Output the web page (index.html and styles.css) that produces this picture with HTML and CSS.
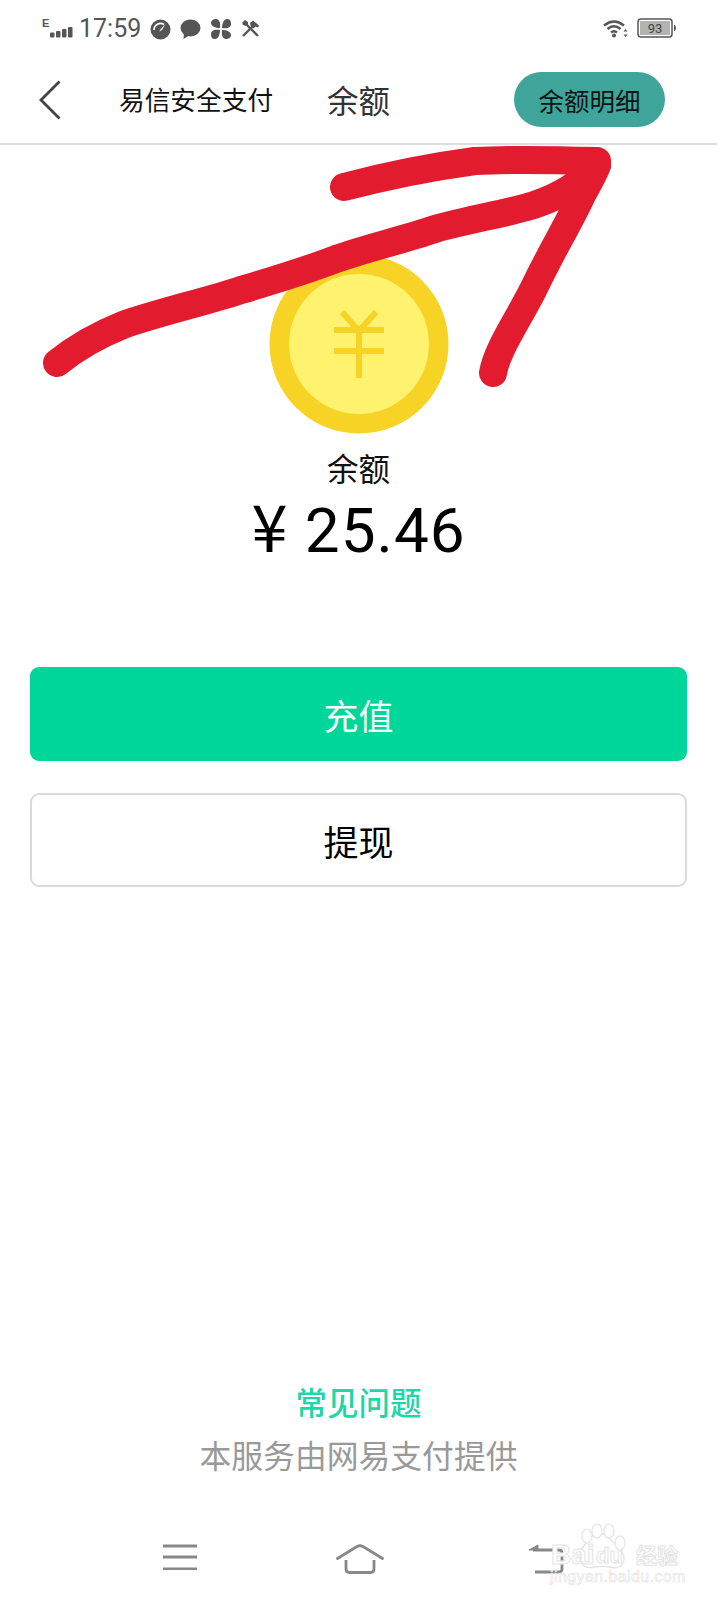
FILE: index.html
```html
<!DOCTYPE html>
<html lang="zh-CN">
<head>
<meta charset="utf-8">
<title>余额</title>
<link rel="stylesheet" href="styles.css">
</head>
<body>
<div class="page">
  <header class="status">
    <div class="status-left">
      <svg class="sig" width="32" height="20" viewBox="0 0 32 20">
        <text x="0" y="9" class="sig-e">E</text>
        <rect x="8" y="14.500" width="4.500" height="5" rx="1" fill="#555"/>
        <rect x="14" y="13" width="4.500" height="6.500" rx="1" fill="#555"/>
        <rect x="20" y="11" width="4.500" height="8.500" rx="1" fill="#555"/>
        <rect x="26" y="9" width="4.500" height="10.500" rx="1" fill="#555"/>
      </svg>
      <span class="time">17:59</span>
      <svg width="21" height="21" viewBox="0 0 21 21" class="ic-gauge">
        <circle cx="10.500" cy="10.500" r="10" fill="#555"/>
        <path d="M4 11a6.500 6.500 0 0 1 10-5.500" fill="none" stroke="#fff" stroke-width="1.600"/>
        <path d="M15.500 5 10.800 10 9 12.500 12 11Z" fill="#fff"/>
      </svg>
      <svg width="21" height="21" viewBox="0 0 21 21" class="ic-bubble">
        <ellipse cx="10.500" cy="9" rx="10" ry="8.500" fill="#555"/>
        <path d="M4 14 3.500 20 10 16Z" fill="#555"/>
      </svg>
      <svg width="22" height="22" viewBox="0 0 22 22" class="ic-fan">
        <path d="M10 10C5 10 1 8 1 5s3-4 5-4 5 2 4 9Z" fill="#555"/>
        <path d="M12 10c0-5 2-9 5-9s4 2 4 5-3 5-9 4Z" fill="#555"/>
        <path d="M12 12c5 0 9 2 9 5s-3 4-5 4-5-2-4-9Z" fill="#555"/>
        <path d="M10 12c0 5-2 9-5 9s-4-2-4-5 3-5 9-4Z" fill="#555"/>
      </svg>
      <svg width="20" height="20" viewBox="0 0 20 20" class="ic-tools">
        <path d="M2 17 13 6" stroke="#555" stroke-width="2.400" fill="none"/>
        <path d="M9 4l3-2.500 6 5-1 2-2.500-1-2 2-3-3Z" fill="#555"/>
        <path d="M6 6 17 17" stroke="#555" stroke-width="2.400" fill="none"/>
        <path d="M1.500 3.500 4 1l3 2v3L4.500 7 1.500 5.500Z" fill="#555"/>
      </svg>
    </div>
    <div class="status-right">
      <svg width="25" height="19" viewBox="0 0 25 19">
        <path d="M1 6.500Q11 -1.500 21 6.500" fill="none" stroke="#555" stroke-width="2.600"/>
        <path d="M4.500 10Q11 4.500 17.500 10" fill="none" stroke="#555" stroke-width="2.600"/>
        <path d="M8 13.500Q11 11 14 13.500" fill="none" stroke="#555" stroke-width="2.600"/>
        <circle cx="11" cy="16.500" r="2" fill="#555"/>
        <path d="M22.500 10l2 2.500h-4ZM22.500 18l-2-2.500h4Z" fill="#555"/>
      </svg>
      <svg width="40" height="20" viewBox="0 0 40 20">
        <rect x="1" y="1" width="34" height="18" rx="3" fill="#fff" stroke="#555" stroke-width="1.500"/>
        <rect x="3" y="3" width="30" height="14" fill="#b3b3b3"/>
        <path d="M37 6.500q2 .5 2 3.500t-2 3.500Z" fill="#555"/>
        <text x="18" y="15" class="batt">93</text>
      </svg>
    </div>
  </header>

  <nav class="nav">
    <svg class="back" width="22" height="40" viewBox="0 0 22 40">
      <path d="M20.500 1.500 2 20l18.500 18.500" fill="none" stroke="#444" stroke-width="2.800"/>
    </svg>
    <span class="nav-sub">易信安全支付</span>
    <span class="nav-title">余额</span>
    <span class="pill">余额明细</span>
  </nav>

  <main class="main">
    <svg class="coin" width="180" height="180" viewBox="0 0 180 180">
      <circle cx="90" cy="90" r="89.500" fill="#f6d324"/>
      <circle cx="90" cy="90" r="70" fill="#fef26f"/>
      <path d="M73 58 90 77 107 58M90 77V124M65 76H115M65 97H115" fill="none" stroke="#f6d324" stroke-width="6"/>
    </svg>
    <div class="label">余额</div>
    <div class="amount"><span class="yen">¥</span> 25.46</div>
    <div class="btn btn-primary">充值</div>
    <div class="btn btn-outline">提现</div>
  </main>

  <footer class="foot">
    <div class="faq">常见问题</div>
    <div class="provider">本服务由网易支付提供</div>
    <div class="softkeys">
      <svg width="34" height="26" viewBox="0 0 34 26">
        <path d="M0 2H34M0 13H34M0 25H34" stroke="#888" stroke-width="2.800"/>
      </svg>
      <svg class="key-home" width="48" height="30" viewBox="0 0 48 30">
        <path d="M1.500 14.500 21 2.500q3-1.500 6 0l19.500 12" fill="none" stroke="#888" stroke-width="2.800" stroke-linecap="round"/>
        <path d="M10 16V25q0 3.500 3.500 3.500h21q3.500 0 3.500-3.500V16" fill="none" stroke="#888" stroke-width="2.800"/>
      </svg>
      <svg width="36" height="30" viewBox="0 0 36 30">
        <path d="M1 6 10 1V6Z" fill="#888" stroke="#888"/>
        <path d="M5 6H31q3 0 3 3V25q0 3-3 3H7" fill="none" stroke="#888" stroke-width="2.800"/>
      </svg>
    </div>
  </footer>

  <svg class="overlay" width="717" height="1600" viewBox="0 0 717 1600">
    <g fill="none" stroke="#e21b2f" stroke-width="28" stroke-linecap="round" stroke-linejoin="round">
      <path d="M57 363C78 346 98 335 123 325C160 312 205 302 241 290C275 280 305 271 336 259C370 247 403 240 435 229C470 219 505 214 534 205C555 198 580 185 597 165"/>
      <path d="M344 187C390 175 430 167 475 161C510 159 560 160 597 161"/>
      <path d="M493 373C497 350 515 325 533 290C552 250 568 225 582 195C590 180 595 172 597 165"/>
    </g>
    <g class="wm">
      <path d="M590 1538c5-6 14-6 19 0 8 9 16 12 15 22-1 7-8 9-14 7-6-1-10-1-16 0-7 2-13-1-14-8-1-9 4-13 10-21Z" fill="#fff" stroke="#e4e4e4" stroke-width="1.400"/>
      <ellipse cx="587" cy="1536" rx="5" ry="7" fill="#fff" stroke="#e4e4e4" stroke-width="1.200"/>
      <ellipse cx="597" cy="1531" rx="5" ry="7" fill="#fff" stroke="#e4e4e4" stroke-width="1.200"/>
      <ellipse cx="609" cy="1531" rx="5" ry="7" fill="#fff" stroke="#e4e4e4" stroke-width="1.200"/>
      <ellipse cx="620" cy="1543" rx="5" ry="7" fill="#fff" stroke="#e4e4e4" stroke-width="1.200"/>
      <text x="551" y="1564" class="wm-big">Bai</text>
      <text x="596" y="1563" class="wm-du">du</text>
      <text x="636" y="1563" class="wm-cn">经验</text>
      <text x="550" y="1582" class="wm-small">jingyan.baidu.com</text>
    </g>
  </svg>
</div>
</body>
</html>
```
FILE: styles.css
```css
* { box-sizing: border-box; }
html, body { margin: 0; padding: 0; background: #fff; }
body { font-family: "Noto Sans CJK SC", "Noto Sans", sans-serif; }

.page {
  position: relative;
  width: 717px;
  height: 1600px;
  overflow: hidden;
  display: flex;
  flex-direction: column;
  background: #fff;
}

.status {
  height: 50px;
  padding: 18px 40px 0 42px;
  display: flex;
  justify-content: space-between;
  align-items: flex-start;
}
.status-left { display: flex; align-items: center; height: 22px; }
.status-right { display: flex; align-items: center; gap: 9px; height: 22px; margin-top: -1px; }
.sig { margin-top: -2px; }
.sig-e { font: 700 11px "Liberation Sans", sans-serif; fill: #555; }
.time {
  font: 400 25px/22px Roboto, sans-serif;
  color: #555;
  margin-left: 5px;
  width: 71px;
}
.ic-bubble { margin-left: 9px; }
.ic-fan { margin-left: 9px; }
.ic-tools { margin-left: 9px; }
.batt { font: 400 13px Roboto, sans-serif; fill: #444; text-anchor: middle; }

.nav {
  height: 95px;
  padding: 5px 52px 0 39px;
  display: flex;
  align-items: center;
  border-bottom: 2px solid #ddd;
}
.back { flex: none; margin-top: 2px; }
.nav-sub { font-size: 25.700px; line-height: 36px; color: #111; margin-left: 58px; width: 208px; }
.nav-title { font-size: 31.500px; line-height: 40px; color: #333; }
.pill {
  margin-left: auto;
  width: 151px;
  height: 55px;
  border-radius: 28px;
  background: #3fa59b;
  color: #0c1413;
  font-size: 25.500px;
  display: flex;
  align-items: center;
  justify-content: center;
}

.main { display: flex; flex-direction: column; align-items: center; padding: 0 30px; }
.coin { margin-top: 109px; flex: none; }
.label { margin-top: 13px; font-size: 31.500px; line-height: 40px; color: #111; }
.amount {
  margin-top: 7px;
  height: 70px;
  font: 400 62px/70px Roboto, "Noto Sans CJK SC", sans-serif;
  letter-spacing: 1px;
  color: #000;
  white-space: pre;
}
.yen { font-family: "Noto Sans CJK SC", sans-serif; font-size: 65px; line-height: 60px; }
.btn {
  width: 100%;
  height: 94px;
  border-radius: 9px;
  display: flex;
  align-items: center;
  justify-content: center;
  font-size: 35px;
}
.btn-primary { margin-top: 103px; background: #00d699; color: #f2fffa; }
.btn-outline { margin-top: 32px; border: 2px solid #dadada; background: #fff; color: #000; }

.foot { margin-top: auto; display: flex; flex-direction: column; align-items: center; }
.faq { font-size: 31.500px; line-height: 44px; font-weight: 500; color: #1fd6a9; }
.provider { margin-top: 9px; font-size: 31.800px; line-height: 44px; color: #999; }
.softkeys {
  margin-top: 68px;
  height: 56px;
  align-self: stretch;
  padding: 0 153px 0 163px;
  display: flex;
  justify-content: space-between;
  align-items: flex-start;
}
.key-home { margin-right: 5px; }

.overlay { position: absolute; left: 0; top: 0; pointer-events: none; }
.wm text { fill: #fff; stroke: #e4e4e4; stroke-width: 1px; }
.wm-big { font: 700 28px "Liberation Sans", sans-serif; }
.wm-du { font: 700 22px "Liberation Sans", sans-serif; }
.wm-cn { font: 700 21px "Noto Sans CJK SC", sans-serif; }
.wm .wm-small { font: 400 16px "Liberation Sans", sans-serif; stroke-width: .6px; letter-spacing: .4px; }
```
